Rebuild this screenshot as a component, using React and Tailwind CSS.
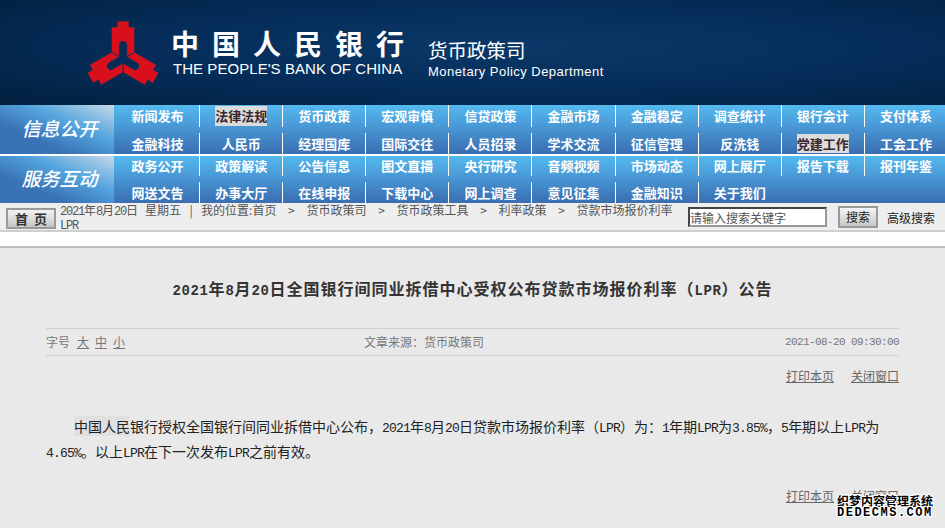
const infoItems = [
  '新闻发布', '法律法规', '货币政策', '宏观审慎', '信贷政策', '金融市场', '金融稳定', '调查统计', '银行会计', '支付体系',
  '金融科技', '人民币', '经理国库', '国际交往', '人员招录', '学术交流', '征信管理', '反洗钱', '党建工作', '工会工作',
]

const serviceItems = [
  '政务公开', '政策解读', '公告信息', '图文直播', '央行研究', '音频视频', '市场动态', '网上展厅', '报告下载', '报刊年鉴',
  '网送文告', '办事大厅', '在线申报', '下载中心', '网上调查', '意见征集', '金融知识', '关于我们',
]

const highlighted = ['法律法规', '党建工作']

const crumbs = ['货币政策司', '货币政策工具', '利率政策', '贷款市场报价利率']

// half-width latin like the bitmap SimSun in the reference
function M({ children }) {
  return <span className="font-['Liberation_Mono',monospace] text-[13px] leading-[0] tracking-[-0.8px]">{children}</span>
}

function S({ children }) {
  return <span className="font-['Liberation_Mono',monospace] text-[12px] leading-[0] tracking-[-1.2px]">{children}</span>
}

function T({ children }) {
  return <span className="font-['Liberation_Mono',monospace] text-[14px] leading-[0] tracking-[0.6px]">{children}</span>
}

function Arm({ rotate }) {
  return (
    <path
      transform={`rotate(${rotate})`}
      d="M-6 -38H6V-32H11.7V-6.7L3.6 -2V-14A3.6 3.6 0 0 0 -3.6 -14V-2L-11.7 -6.7V-32H-6Z"
      fill="#d9101c"
      stroke="#0a2f5c"
      strokeWidth="0.8"
    />
  )
}

function Logo() {
  return (
    <svg width="76" height="66" viewBox="-38 -39 76 66" className="shrink-0">
      <Arm rotate={0} />
      <Arm rotate={120} />
      <Arm rotate={240} />
    </svg>
  )
}

function NavBlock({ label, items, height, rows }) {
  return (
    <div className={`flex bg-[linear-gradient(to_bottom,#54baf0,#3a6db2)] ${height}`}>
      <div className="flex w-[114px] shrink-0 items-center justify-center bg-[linear-gradient(to_top_right,#3a72b6_30%,#52a4de_62%,#c6d9e8_100%)] pb-[2px] pl-[5px] text-[19px] font-medium italic text-white">
        {label}
      </div>
      <div className={`ml-[2px] grid w-[831px] shrink-0 grid-cols-10 gap-y-[6px] ${rows}`}>
        {items.map((item, i) => (
          <div
            key={item}
            className={`flex items-center justify-center text-[13px] font-bold text-white ${i % 10 ? 'border-l border-white' : ''}`}
          >
            <span className={highlighted.includes(item) ? 'bg-[#dcdcdc] text-[#3a2630]' : ''}>{item}</span>
          </div>
        ))}
      </div>
    </div>
  )
}

function PageLinks() {
  return (
    <div className="flex justify-end gap-[17px] text-[12px] text-[#666] underline">
      <a>打印本页</a>
      <a>关闭窗口</a>
    </div>
  )
}

export default function App() {
  return (
    <div className="h-[528px] overflow-hidden bg-[#e9e9e9] font-['Noto_Sans_CJK_SC',sans-serif]">
      <header className="flex h-[105px] items-center bg-[radial-gradient(ellipse_at_55%_45%,#0b3868_0%,#052c58_55%,#02203e_100%)] pl-[85px] text-white">
        <Logo />
        <div className="ml-[12px] w-[255px]">
          <div className="-ml-[2px] whitespace-nowrap text-[28px] font-bold leading-[32px] tracking-[13px]">中国人民银行</div>
          <div className="mt-[1px] whitespace-nowrap font-['Liberation_Sans',sans-serif] text-[15px] leading-[18px] tracking-[0.05px]">
            THE PEOPLE'S BANK OF CHINA
          </div>
        </div>
        <div className="mt-[13px]">
          <div className="text-[19.5px] leading-[24px]">货币政策司</div>
          <div className="mt-[1px] whitespace-nowrap font-['Liberation_Sans',sans-serif] text-[13px] leading-[18px] tracking-[0.45px]">
            Monetary Policy Department
          </div>
        </div>
      </header>

      <nav className="overflow-hidden">
        <NavBlock label="信息公开" items={infoItems} height="h-[49px]" rows="grid-rows-[22px_21px]" />
        <div className="h-[2px] bg-white" />
        <NavBlock label="服务互动" items={serviceItems} height="h-[47px]" rows="grid-rows-[20px_21px]" />
      </nav>

      <div className="flex h-[29px] border-b-2 border-[#cfcfcf] bg-[#eeeeee] pl-[6px]">
        <button className="mt-[5px] h-[21px] w-[50px] shrink-0 border-2 border-[#9a9a9a] bg-[linear-gradient(to_bottom,#f4f4f4,#c4c4c4)] pl-[6px] text-[13px] font-bold leading-none tracking-[6px] text-[#333]">
          首页
        </button>
        <div className="ml-[4px] w-[620px] shrink-0 text-[12px] leading-[14px] text-[#555]">
          <div className="flex whitespace-nowrap">
            <span><S>2021</S>年<S>8</S>月<S>20</S>日</span>
            <span className="ml-[7px]">星期五</span>
            <span className="w-[20px] text-center">|</span>
            <span>我的位置:首页</span>
            {crumbs.map((crumb) => (
              <span key={crumb} className="flex">
                <span className="w-[30px] text-center">{'>'}</span>
                {crumb}
              </span>
            ))}
          </div>
          <div><S>LPR</S></div>
        </div>
        <input
          readOnly
          placeholder="请输入搜索关键字"
          className="ml-[8px] mt-[4px] h-[20px] w-[139px] shrink-0 border-2 border-b-[#999] border-l-[#444] border-r-[#999] border-t-[#444] bg-white text-[12px] placeholder:text-[#555]"
        />
        <button className="ml-[11px] mt-[3px] h-[22px] w-[40px] shrink-0 border-2 border-[#999] bg-[linear-gradient(to_bottom,#f4f4f4,#c8c8c8)] text-[12px] leading-none text-[#222]">
          搜索
        </button>
        <a className="ml-[9px] mt-[7px] whitespace-nowrap text-[12px] leading-[16px] text-[#222]">高级搜索</a>
      </div>

      <div className="h-[16px] border-b-2 border-[#bdbdbd] bg-white" />

      <main className="px-[46px] pt-[28px]">
        <h1 className="text-center text-[16px] font-bold leading-[24px] tracking-[1px] text-[#333]">
          <T>2021</T>年<T>8</T>月<T>20</T>日全国银行间同业拆借中心受权公布贷款市场报价利率（<T>LPR</T>）公告
        </h1>

        <div className="mt-[28px] grid h-[28px] grid-cols-[318px_1fr_auto] items-center border-y border-[#cfcfcf] text-[12px] text-[#777]">
          <div className="flex">
            <span>字号</span>
            <a className="ml-[7px] underline">大</a>
            <a className="ml-[6px] underline">中</a>
            <a className="ml-[6px] underline">小</a>
          </div>
          <div>文章来源：货币政策司</div>
          <div className="font-['Liberation_Mono',monospace] text-[11px] tracking-[-0.6px]">2021-08-20 09:30:00</div>
        </div>

        <div className="mt-[11px]">
          <PageLinks />
        </div>

        <p className="mt-[29px] indent-[28px] text-[14px] leading-[25px] text-[#222]">
          <span className="bg-[#e0e0e0]">中国人民</span>银行授权全国银行间同业拆借中心公布，<M>2021</M>年<M>8</M>月<M>20</M>日贷款市场报价利率（<M>LPR</M>）为：<M>1</M>年期<M>LPR</M>为<M>3.85%</M>，<M>5</M>年期以上<M>LPR</M>为<M>4.65%</M>。以上<M>LPR</M>在下一次发布<M>LPR</M>之前有效。
        </p>

        <div className="mt-[23px]">
          <PageLinks />
        </div>
      </main>

      <div className="absolute left-[837px] top-[493px] w-[100px] font-bold text-black [text-shadow:1px_0_0_#fff,-1px_0_0_#fff,0_1px_0_#fff,0_-1px_0_#fff,1px_1px_0_#fff,-1px_-1px_0_#fff,1px_-1px_0_#fff,-1px_1px_0_#fff]">
        <div className="text-[12px] leading-[15px]">织梦内容管理系统</div>
        <div className="font-['Liberation_Mono',monospace] text-[12px] leading-[11px] tracking-[1.5px]">DEDECMS.COM</div>
      </div>
    </div>
  )
}
